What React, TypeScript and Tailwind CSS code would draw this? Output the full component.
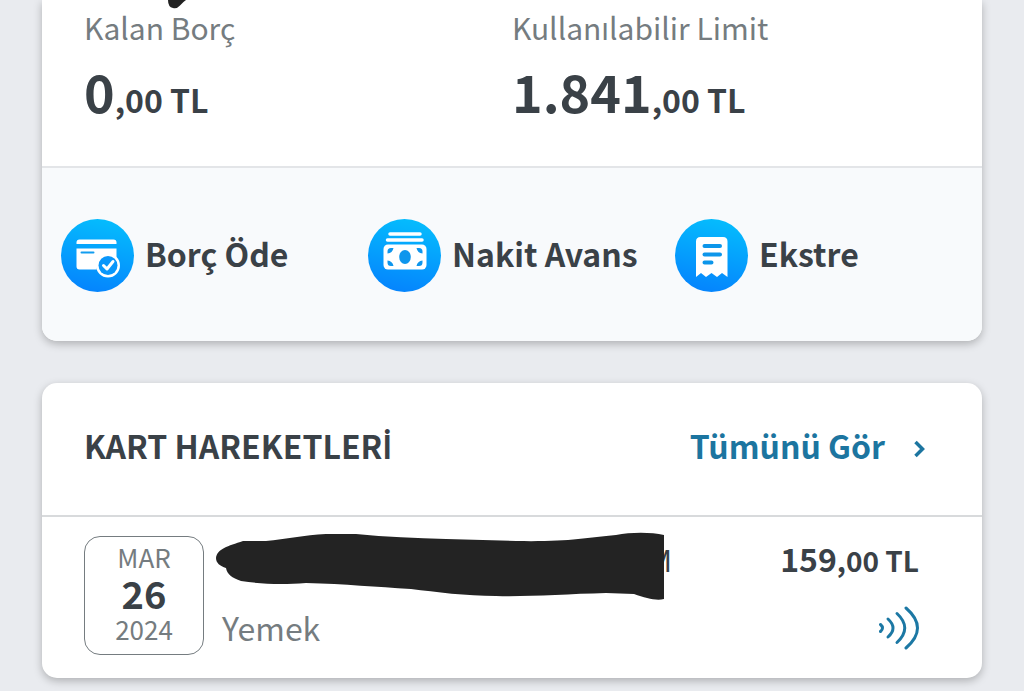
import type { ReactNode } from "react";

const actions: { label: string; icon: ReactNode }[] = [
  { label: "Borç Öde", icon: <CardCheckIcon /> },
  { label: "Nakit Avans", icon: <CashIcon /> },
  { label: "Ekstre", icon: <ReceiptIcon /> },
];

function IconCircle({ id, children }: { id: string; children: ReactNode }) {
  return (
    <svg viewBox="0 0 73 73" className="w-[73px] h-[73px] shrink-0" aria-hidden="true">
      <defs>
        <linearGradient id={id} x1="0.6" y1="0" x2="0.4" y2="1">
          <stop offset="0" stopColor="#05bcfd" />
          <stop offset="1" stopColor="#0584fd" />
        </linearGradient>
      </defs>
      <circle cx="36.5" cy="36.5" r="36.5" fill={`url(#${id})`} />
      {children}
    </svg>
  );
}

function CardCheckIcon() {
  return (
    <IconCircle id="card-bg">
      <path d="M15.500 25v-1.500q0-3 3-3h34q3 0 3 3V25z" fill="#fff" />
      <path d="M15.500 29.500h40v13a12 12 0 0 0-20 8H18.500q-3 0-3-3z" fill="#fff" />
      <path d="M20.500 33.500h12" stroke="#129df0" strokeWidth="2" strokeLinecap="round" />
      <circle cx="47" cy="46.500" r="12" fill="#fff" />
      <circle cx="47" cy="46.500" r="9.500" fill="#0a97fb" />
      <path
        d="M42.500 46.500l3.500 3.500 6-7.500"
        fill="none"
        stroke="#fff"
        strokeWidth="3"
        strokeLinecap="round"
        strokeLinejoin="round"
      />
    </IconCircle>
  );
}

function CashIcon() {
  return (
    <IconCircle id="cash-bg">
      <path d="M22 15h30M19.500 21h34.500" stroke="#fff" strokeWidth="3.500" strokeLinecap="round" />
      <rect x="15.500" y="25.500" width="43" height="25" rx="4.500" fill="#fff" />
      <ellipse cx="37" cy="38" rx="5.800" ry="7" fill="#0e96ed" />
      <path
        d="M19.500 34.500v-2q0-3.500 3.500-3.500h2.500q-1 5-6 5.500zM54.500 34.500v-2q0-3.500-3.500-3.500h-2.500q1 5 6 5.500zM19.500 41.500v2q0 3.500 3.500 3.500h2.500q-1-5-6-5.500zM54.500 41.500v2q0 3.500-3.500 3.500h-2.500q1-5 6-5.500z"
        fill="#0e96ed"
      />
    </IconCircle>
  );
}

function ReceiptIcon() {
  return (
    <IconCircle id="receipt-bg">
      <path
        d="M21 22.500q0-4.500 4.500-4.500h22.500q4.500 0 4.500 4.500v35.500l-5.500-4-5 4-5.500-4-5.500 4-5-4-5 4z"
        fill="#fff"
      />
      <path
        d="M29.500 27h15.500M29.500 35.500h15.500M29.500 43.500h7"
        stroke="#0d96ea"
        strokeWidth="4"
        strokeLinecap="round"
      />
    </IconCircle>
  );
}

function Balance({ label, whole, cents }: { label: string; whole: string; cents: string }) {
  return (
    <div>
      <div className="text-[30px] leading-10 text-[#757c80]">{label}</div>
      <div className="mt-3 text-[52px] leading-16 font-bold">
        {whole}
        <span className="text-[32px] leading-none">{cents}</span>
      </div>
    </div>
  );
}

export default function App() {
  return (
    <div className="min-h-screen bg-[#e9ebef] px-[42px] pb-[13px] font-['Noto_Sans_CJK_SC','Noto_Sans',sans-serif] text-[#3a4147]">
      <section className="relative rounded-b-[15px] bg-white shadow-[0_3px_8px_rgb(0,0,0,0.25)]">
        <svg viewBox="0 0 20 9" className="absolute top-0 left-[126px] w-5 h-[9px]" aria-hidden="true">
          <path d="M0 0h18q-3 2-6 5.500T5 8Q0 7 0 0z" fill="#222" />
        </svg>
        <div className="grid grid-cols-2 border-b-2 border-[#e3e5e8] px-[42px] pt-[7px] pb-[43px]">
          <Balance label="Kalan Borç" whole="0" cents=",00 TL" />
          <Balance label="Kullanılabilir Limit" whole="1.841" cents=",00 TL" />
        </div>
        <div className="grid grid-cols-3 rounded-b-[15px] bg-[#f8fafc] pt-[51px] pb-[49px] pl-[19px]">
          {actions.map((action) => (
            <button key={action.label} type="button" className="flex items-center gap-[11px]">
              {action.icon}
              <span className="pb-1.5 text-[32px] leading-10 font-bold whitespace-nowrap">
                {action.label}
              </span>
            </button>
          ))}
        </div>
      </section>

      <section className="mt-[42px] rounded-[15px] bg-white shadow-[0_3px_8px_rgb(0,0,0,0.25)]">
        <div className="flex items-center justify-between border-b-2 border-[#d8dadc] pt-[42px] pr-[57px] pb-[50px] pl-[42px]">
          <h2 className="text-[32px] leading-10 font-bold">
            KART HAREKETLER<span className="font-['Lato'] leading-none">İ</span>
          </h2>
          <a href="#" className="flex items-center gap-7 text-[32px] leading-10 font-bold text-[#1c75a0]">
            Tümünü Gör
            <svg viewBox="0 0 12 18" className="mt-2 w-3 h-[18px]" aria-hidden="true">
              <path d="M2.500 2l7 7-7 7" fill="none" stroke="currentColor" strokeWidth="3.500" />
            </svg>
          </a>
        </div>
        <div className="flex pt-[19px] pr-[63px] pb-[23px] pl-[42px]">
          <div className="w-[120px] shrink-0 rounded-[16px] border border-[#757c80] py-[6px] text-center text-[26px] leading-7 text-[#757c80]">
            <div>MAR</div>
            <div className="text-[38px] leading-11 font-bold text-[#3a4147]">26</div>
            <div className="pb-[5px]">2024</div>
          </div>
          <div className="ml-[18px] flex-1">
            <div className="relative w-[450px] pt-[3px] text-right text-[30px] leading-10">
              M
              <svg
                viewBox="0 0 450 70"
                className="absolute -top-1 -left-1.5 w-[450px] h-[70px]"
                aria-hidden="true"
              >
                <path
                  d="M0 26C1 17 12 14 27 9L50 9C70 7 88 3 110 2L140 2C170 5 200 6 230 7L300 9C350 10 370 6 400 3C415 0 435 0 448 3V67C440 69 430 66 418 62L390 61C350 62 310 65 280 64C250 64 220 60 195 57C160 55 130 52 90 51C65 53 45 52 25 49C16 46 11 42 10 36C4 34 0 31 0 26z"
                  fill="#232323"
                />
              </svg>
            </div>
            <div className="mt-7 text-[32px] leading-10 text-[#757c80]">Yemek</div>
          </div>
          <div className="flex flex-col items-end pt-0.5">
            <div className="text-[32px] leading-10 font-bold">
              159<span className="text-[28px] leading-none">,00 TL</span>
            </div>
            <svg
              viewBox="0 0 40 44"
              className="mt-7 w-10 h-11"
              fill="none"
              stroke="#1c78a4"
              strokeWidth="3"
              strokeLinecap="round"
              role="img"
              aria-label="Temassız"
            >
              <path d="M1.500 18.500q4 3.500 0 7" />
              <path d="M9 13q10 9 0 18" />
              <path d="M18 7.500q15.500 14.500 0 29" />
              <path d="M27 2q23 20 0 40" />
            </svg>
          </div>
        </div>
      </section>
    </div>
  );
}
